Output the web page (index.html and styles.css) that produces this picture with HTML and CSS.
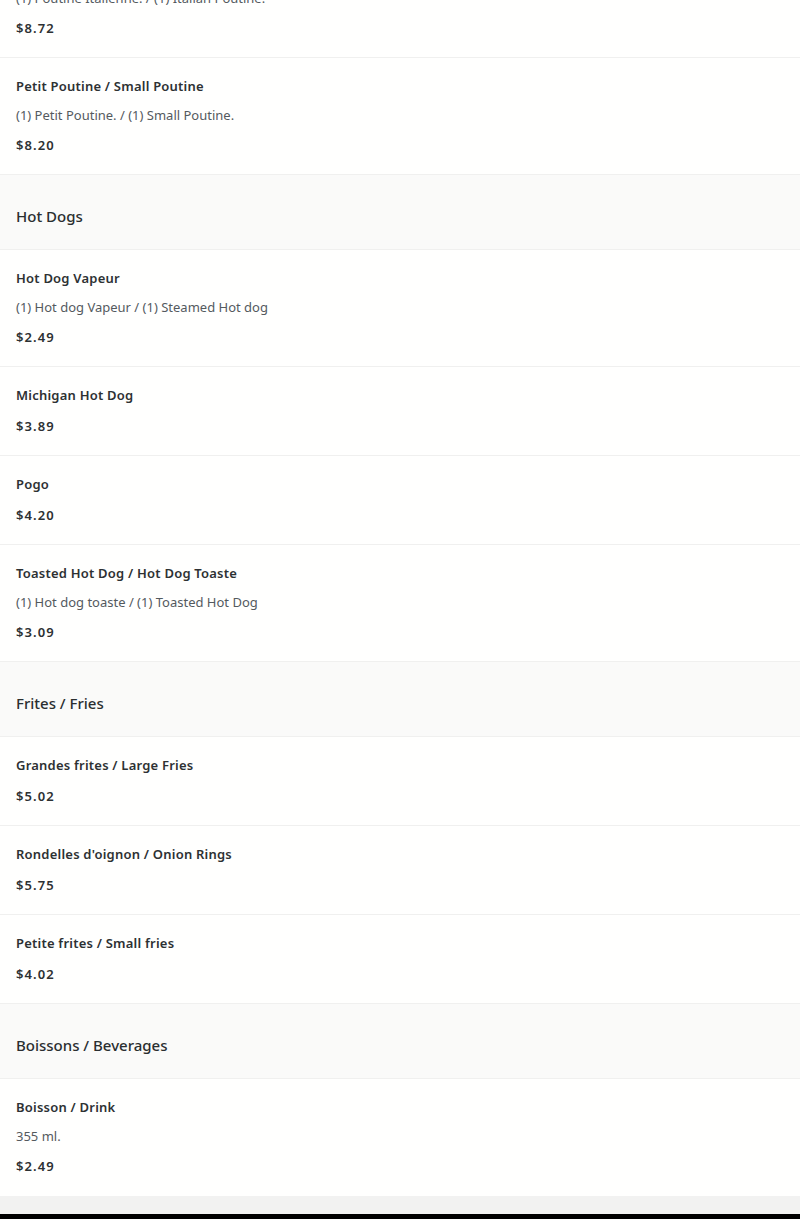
FILE: index.html
```html
<!DOCTYPE html>
<html lang="fr">
<head>
<meta charset="utf-8">
<title>Menu</title>
<link rel="stylesheet" href="styles.css">
</head>
<body>
<main class="menu">
  <div class="item">
    <div class="item-title">Poutine Italienne / Italian Poutine</div>
    <div class="item-desc">(1) Poutine Italienne. / (1) Italian Poutine.</div>
    <div class="item-price">$8.72</div>
  </div>
  <div class="item">
    <div class="item-title">Petit Poutine / Small Poutine</div>
    <div class="item-desc">(1) Petit Poutine. / (1) Small Poutine.</div>
    <div class="item-price">$8.20</div>
  </div>

  <h2 class="category">Hot Dogs</h2>
  <div class="item">
    <div class="item-title">Hot Dog Vapeur</div>
    <div class="item-desc">(1) Hot dog Vapeur / (1) Steamed Hot dog</div>
    <div class="item-price">$2.49</div>
  </div>
  <div class="item">
    <div class="item-title">Michigan Hot Dog</div>
    <div class="item-price">$3.89</div>
  </div>
  <div class="item">
    <div class="item-title">Pogo</div>
    <div class="item-price">$4.20</div>
  </div>
  <div class="item">
    <div class="item-title">Toasted Hot Dog / Hot Dog Toaste</div>
    <div class="item-desc">(1) Hot dog toaste / (1) Toasted Hot Dog</div>
    <div class="item-price">$3.09</div>
  </div>

  <h2 class="category">Frites / Fries</h2>
  <div class="item">
    <div class="item-title">Grandes frites / Large Fries</div>
    <div class="item-price">$5.02</div>
  </div>
  <div class="item">
    <div class="item-title">Rondelles d'oignon / Onion Rings</div>
    <div class="item-price">$5.75</div>
  </div>
  <div class="item">
    <div class="item-title">Petite frites / Small fries</div>
    <div class="item-price">$4.02</div>
  </div>

  <h2 class="category">Boissons / Beverages</h2>
  <div class="item item-last">
    <div class="item-title">Boisson / Drink</div>
    <div class="item-desc">355 ml.</div>
    <div class="item-price">$2.49</div>
  </div>
</main>
<div class="footer-band"></div>
<div class="footer-dark"></div>
</body>
</html>
```
FILE: styles.css
```css
html, body {
  margin: 0;
  padding: 0;
  background: #ffffff;
}
body {
  font-family: "Noto Sans", "Open Sans", sans-serif;
  color: #2d3133;
  overflow: hidden;
}
.menu {
  margin-top: -59px;
  display: flex;
  flex-direction: column;
}
.item {
  display: flex;
  flex-direction: column;
  padding: 18px 16px 19px;
  border-bottom: 1px solid #f0f0ef;
  background: #fffffe;
}
.item-last {
  border-bottom: none;
  padding-bottom: 20px;
}
.item-title {
  font-size: 13px;
  line-height: 20px;
  font-weight: 600;
  letter-spacing: 0.22px;
  color: #2d3133;
}
.item-desc {
  margin-top: 9px;
  font-size: 13px;
  line-height: 20px;
  color: #545a5e;
}
.item-price {
  margin-top: 11px;
  font-size: 13px;
  line-height: 20px;
  font-weight: 600;
  letter-spacing: 1.1px;
  color: #2d3133;
}
.item-desc + .item-price {
  margin-top: 10px;
}
.category {
  margin: 0;
  padding: 30px 16px 22px;
  font-size: 15px;
  line-height: 22px;
  font-weight: 500;
  color: #2a2e30;
  background: #fafaf9;
  border-bottom: 1px solid #f0f0ef;
}
.footer-band {
  height: 18px;
  background: #f2f2f1;
}
.footer-dark {
  height: 40px;
  background: #000000;
}
```
